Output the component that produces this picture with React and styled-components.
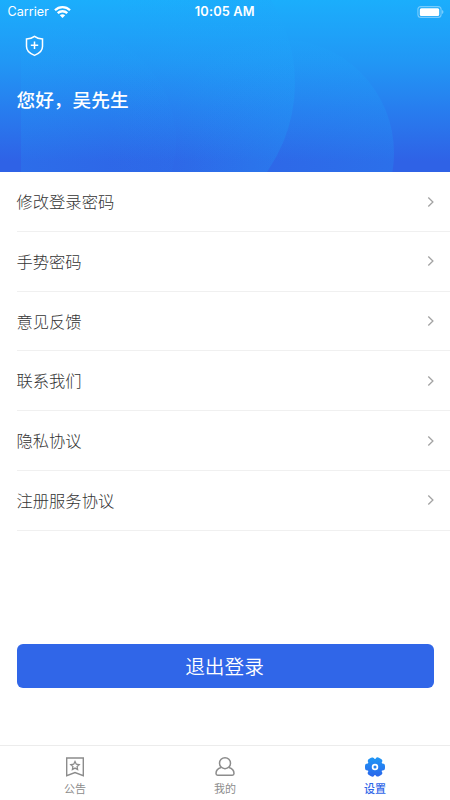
import styled, { createGlobalStyle } from 'styled-components';

const GlobalStyle = createGlobalStyle`
  body {
    margin: 0;
    font-family: "Noto Sans CJK SC", sans-serif;
    background-color: white;
  }
`;

const Main = styled.div`
  position: relative;
  height: 800px;
  width: 450px;
  display: flex;
  flex-direction: column;
  overflow: hidden;
  background-color: white;
`;

const Header = styled.header`
  position: relative;
  height: 172px;
  flex: none;
  color: white;
  background: linear-gradient(180deg, #1baefc 0%, #2197f5 36%, #287bee 66%, #2f62e6 94%);
`;

const Backdrop = styled.svg`
  position: absolute;
  top: 0;
  left: 0;
`;

const HeaderContent = styled.div`
  position: relative;
`;

const StatusBar = styled.div`
  height: 24px;
  display: grid;
  grid-template-columns: 1fr auto 1fr;
  align-items: center;
  padding: 0 6px 0 7.5px;
  font-family: Inter, sans-serif;
  font-size: 12.8px;
  line-height: 24px;
`;

const Carrier = styled.div`
  display: flex;
  align-items: center;
  gap: 5.5px;
  font-size: 12.6px;
`;

const Time = styled.div`
  margin-left: -2px;
  font-weight: 600;
  letter-spacing: 0.15px;
`;

const Battery = styled.svg`
  justify-self: end;
  margin-top: -1px;
`;

const Shield = styled.svg`
  display: block;
  margin: 11px 0 0 25px;
`;

const Greeting = styled.h1`
  margin: 28px 0 0 16.5px;
  font-size: 18.7px;
  line-height: 28px;
  font-weight: 500;
`;

const List = styled.ul`
  list-style: none;
  margin: 0;
  padding: 0 0 0 16.5px;
`;

const Row = styled.li`
  box-sizing: border-box;
  height: 59.75px;
  display: flex;
  align-items: center;
  justify-content: space-between;
  padding-right: 15px;
  border-bottom: 1px solid #f0f0f0;
  color: #333;
  font-size: 16.3px;
  font-weight: 300;

  span {
    padding-bottom: 0.5px;
  }

  svg {
    margin-top: 0.5px;
  }
`;

const LogoutButton = styled.button`
  height: 43.5px;
  flex: none;
  margin: 113.5px 16.5px 0;
  padding: 0 1px 1px 0;
  border: none;
  border-radius: 6px;
  background-color: #3066e8;
  color: white;
  font-family: inherit;
  font-size: 19.7px;
  font-weight: 350;
`;

const TabBar = styled.nav`
  box-sizing: border-box;
  height: 55px;
  flex: none;
  margin-top: auto;
  display: flex;
  border-top: 1px solid #ececec;
`;

const Tab = styled.div`
  flex: 1;
  display: flex;
  flex-direction: column;
  align-items: center;
  padding-top: 10px;
  font-size: 11px;
  line-height: 16px;
  color: ${(props) => (props.$active ? '#2f66e8' : '#8c8c8c')};
  font-weight: ${(props) => (props.$active ? 500 : 400)};

  svg {
    margin-bottom: 2px;
  }
`;

const items = ['修改登录密码', '手势密码', '意见反馈', '联系我们', '隐私协议', '注册服务协议'];

function HeaderBackdrop() {
  return (
    <Backdrop width="450" height="172">
      <defs>
        <linearGradient id="left-glow" gradientUnits="userSpaceOnUse" x1="21" y1="0" x2="176" y2="0">
          <stop offset="0" stopColor="#1fa6fa" stopOpacity="0.16" />
          <stop offset="1" stopColor="#1fa6fa" stopOpacity="0.03" />
        </linearGradient>
        <linearGradient id="middle-glow" gradientUnits="userSpaceOnUse" x1="110" y1="0" x2="295" y2="0">
          <stop offset="0" stopColor="#1fa6fa" stopOpacity="0" />
          <stop offset="1" stopColor="#1fa6fa" stopOpacity="0.25" />
        </linearGradient>
        <linearGradient id="right-glow" gradientUnits="userSpaceOnUse" x1="170" y1="0" x2="394" y2="0">
          <stop offset="0" stopColor="#1fa6fa" stopOpacity="0" />
          <stop offset="1" stopColor="#1fa6fa" stopOpacity="0.2" />
        </linearGradient>
        <clipPath id="left-edge">
          <rect x="21" y="0" width="429" height="172" />
        </clipPath>
      </defs>
      <g clipPath="url(#left-edge)">
        <circle cx="62" cy="141" r="114" fill="url(#left-glow)" />
        <circle cx="140" cy="83" r="155" fill="url(#middle-glow)" />
        <circle cx="280" cy="153" r="114" fill="url(#right-glow)" />
      </g>
    </Backdrop>
  );
}

function WifiIcon() {
  return (
    <svg width="17" height="12" viewBox="0 0 17 12" fill="none" stroke="white" strokeWidth="2.3">
      <path d="M1 4.3C5.2 .1 11.8 .1 16 4.3" />
      <path d="M3.7 7.2C6.4 4.6 10.6 4.6 13.3 7.2" />
      <path d="M8.5 11.9L5.8 9.2C7.3 7.8 9.7 7.8 11.2 9.2Z" fill="white" stroke="none" />
    </svg>
  );
}

function Chevron() {
  return (
    <svg width="8" height="12" viewBox="0 0 8 12" fill="none" stroke="#a3a3a3" strokeWidth="1.3">
      <path d="M1.3 1.5L5.9 6L1.3 10.5" />
    </svg>
  );
}

function NoticeIcon() {
  return (
    <svg width="22" height="22" viewBox="0 0 22 22" fill="none" stroke="#8c8c8c" strokeWidth="1.4">
      <path d="M2.7 2H19.3V19.7L11 16.5L2.7 19.7Z" />
      <path d="M11 5.5L12.3 8.2L15.2 8.6L13.1 10.6L13.6 13.5L11 12.1L8.4 13.5L8.9 10.6L6.8 8.6L9.7 8.2Z" strokeWidth="1.3" />
    </svg>
  );
}

function PersonIcon() {
  return (
    <svg width="22" height="22" viewBox="0 0 22 22" fill="none" stroke="#8c8c8c" strokeWidth="1.5">
      <circle cx="11" cy="7.2" r="5.5" />
      <path d="M7.2 11.4C3.8 12.2 2 14.5 2 17.5C2 18.7 2.6 19.2 3.7 19.2H18.3C19.4 19.2 20 18.7 20 17.5C20 14.5 18.2 12.2 14.8 11.4" />
    </svg>
  );
}

function GearIcon() {
  return (
    <svg width="22" height="22" viewBox="0 0 22 22">
      <defs>
        <linearGradient id="gear" x1="0" y1="0" x2="0" y2="1">
          <stop offset="0" stopColor="#1f9bf6" />
          <stop offset="1" stopColor="#2c63ea" />
        </linearGradient>
        <clipPath id="teeth">
          <circle cx="11" cy="11" r="7.9" />
          {[0, 60, 120, 180, 240, 300].map((angle) => (
            <rect key={angle} x="14" y="7.4" width="7" height="7.2" rx="2.4" transform={`rotate(${angle} 11 11)`} />
          ))}
        </clipPath>
      </defs>
      <rect width="22" height="22" fill="url(#gear)" clipPath="url(#teeth)" />
      <circle cx="11" cy="11" r="2.4" fill="#2383ef" stroke="white" strokeWidth="1.7" />
    </svg>
  );
}

export default function App() {
  return (
    <Main>
      <GlobalStyle />
      <Header>
        <HeaderBackdrop />
        <HeaderContent>
          <StatusBar>
            <Carrier>
              Carrier
              <WifiIcon />
            </Carrier>
            <Time>10:05 AM</Time>
            <Battery width="27" height="12" viewBox="0 0 27 12">
              <rect x="0.9" y="0.6" width="23.2" height="10.8" rx="3" fill="none" stroke="white" strokeOpacity="0.4" strokeWidth="1.1" />
              <rect x="2.8" y="2.2" width="19.4" height="7.8" rx="1.5" fill="white" />
              <path d="M25.2 4C26.8 4.5 26.8 7.5 25.2 8Z" fill="white" fillOpacity="0.5" />
            </Battery>
          </StatusBar>
          <Shield width="19" height="22" viewBox="0 0 19 22" fill="none" stroke="white" strokeWidth="1.5">
            <path d="M9.5 1.4C7.2 3.2 4.5 4 1.5 4.1V11.5C1.5 15.6 4.5 18.5 9.5 20.4C14.5 18.5 17.5 15.6 17.5 11.5V4.1C14.5 4 11.8 3.2 9.5 1.4Z" />
            <path d="M9.5 6.5V14M5.8 10.25H13.2" />
          </Shield>
          <Greeting>您好，吴先生</Greeting>
        </HeaderContent>
      </Header>
      <List>
        {items.map((item) => (
          <Row key={item}>
            <span>{item}</span>
            <Chevron />
          </Row>
        ))}
      </List>
      <LogoutButton>退出登录</LogoutButton>
      <TabBar>
        <Tab>
          <NoticeIcon />
          公告
        </Tab>
        <Tab>
          <PersonIcon />
          我的
        </Tab>
        <Tab $active>
          <GearIcon />
          设置
        </Tab>
      </TabBar>
    </Main>
  );
}
